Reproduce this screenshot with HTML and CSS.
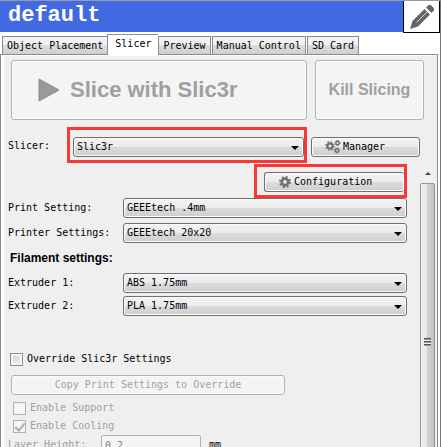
FILE: index.html
```html
<!DOCTYPE html>
<html lang="en">
<head>
    <meta charset="UTF-8">
    <meta name="viewport" content="width=device-width, initial-scale=1.0">
    <title>default</title>
    <link rel="stylesheet" href="styles.css">
</head>
<body>
    <header class="titlebar">
        <h1>default</h1>
        <button type="button" class="edit" aria-label="Edit">
            <svg width="26" height="26" viewBox="0 0 26 26" fill="#666">
                <path d="M1 25l2.500-8L15.500 5l5.500 5.500L9 22.500z"/>
                <path d="M17 3.500l2-2c1-1 2.300-.9 3.300.1l2.100 2.100c1 1 1 2.300.1 3.300l-2 2z"/>
                <path d="M7.500 18.500L18 8" stroke="#ddd" fill="none"/>
            </svg>
        </button>
    </header>

    <nav class="tabs">
        <button type="button" class="tab tab-wide">Object Placement</button>
        <button type="button" class="tab active">Slicer</button>
        <button type="button" class="tab">Preview</button>
        <button type="button" class="tab">Manual Control</button>
        <button type="button" class="tab">SD Card</button>
    </nav>

    <main class="panel">
        <div class="actions">
            <button type="button" class="big slice" disabled>
                <svg width="22" height="24" viewBox="0 0 22 24"><path d="M1 1l20 11L1 23z" fill="#999" stroke="#8c8c8c"/></svg>
                Slice with Slic3r
            </button>
            <button type="button" class="big kill" disabled>Kill Slicing</button>
        </div>

        <div class="slicer-row">
            <label for="slicer">Slicer:</label>
            <div class="highlight grow">
                <div class="combo">
                    <select id="slicer"><option>Slic3r</option></select>
                </div>
            </div>
            <button type="button" class="btn manager">
                <svg width="16" height="14" viewBox="0 0 16 14" fill="none" stroke="#707070">
                    <circle cx="5" cy="6" r="2.500" stroke-width="2"/>
                    <circle cx="5" cy="6" r="4" stroke-width="1.600" stroke-dasharray="1.600 1.540"/>
                    <circle cx="12.500" cy="3" r="1.700" stroke-width="1.400"/>
                    <circle cx="12.500" cy="3" r="2.600" stroke-dasharray="1 1.040"/>
                    <circle cx="12" cy="10.500" r="1.700" stroke-width="1.400"/>
                    <circle cx="12" cy="10.500" r="2.600" stroke-dasharray="1 1.040"/>
                </svg>
                Manager
            </button>
        </div>

        <div class="scroll-area">
            <div class="content">
                <div class="highlight config">
                    <button type="button" class="btn">
                        <svg width="12" height="12" viewBox="0 0 12 12" fill="none" stroke="#707070">
                            <circle cx="6" cy="6" r="3.200" stroke-width="2.600"/>
                            <circle cx="6" cy="6" r="5" stroke-width="2" stroke-dasharray="2 1.930"/>
                        </svg>
                        Configuration
                    </button>
                </div>

                <div class="field">
                    <label for="print">Print Setting:</label>
                    <div class="combo"><select id="print"><option>GEEEtech .4mm</option></select></div>
                </div>
                <div class="field">
                    <label for="printer">Printer Settings:</label>
                    <div class="combo"><select id="printer"><option>GEEEtech 20x20</option></select></div>
                </div>

                <h2>Filament settings:</h2>
                <div class="field tight">
                    <label for="ext1">Extruder 1:</label>
                    <div class="combo"><select id="ext1"><option>ABS 1.75mm</option></select></div>
                </div>
                <div class="field tight">
                    <label for="ext2">Extruder 2:</label>
                    <div class="combo"><select id="ext2"><option>PLA 1.75mm</option></select></div>
                </div>

                <label class="check override"><input type="checkbox"> Override Slic3r Settings</label>
                <button type="button" class="btn copy" disabled>Copy Print Settings to Override</button>
                <label class="check sub"><input type="checkbox" disabled> Enable Support</label>
                <label class="check sub"><input type="checkbox" checked disabled> Enable Cooling</label>
                <div class="layer">
                    <label for="layer">Layer Height:</label>
                    <input type="text" id="layer" value="0.2" disabled>
                    <span>mm</span>
                </div>
            </div>

            <div class="scrollbar">
                <div class="up"></div>
                <div class="thumb"><span class="grip"></span></div>
            </div>
        </div>
    </main>
</body>
</html>
```
FILE: styles.css
```css
* { box-sizing: border-box; }

body {
    display: flex;
    flex-direction: column;
    height: 100vh;
    margin: 0;
    overflow: hidden;
    background: #fff;
    border-top: 1px solid #9a9a9a;
    border-right: 1px solid #777;
    font: 10px/14px "DejaVu Sans Mono", "Liberation Mono", monospace;
    color: #000;
}
button, select, input { margin: 0; font: inherit; color: inherit; }
svg { flex: none; }

/* title bar */
.titlebar {
    display: flex;
    flex: none;
    height: 32px;
    padding-left: 8px;
    background: #4169e1;
    border-bottom: 1px solid #fff;
}
h1 {
    flex: 1;
    margin: 0;
    font: bold 22px/30px "Liberation Mono", monospace;
    color: #fff;
}
.edit {
    display: flex;
    align-items: center;
    justify-content: center;
    width: 37px;
    height: 33px;
    margin-top: -1px;
    padding: 0;
    background: #fff;
    border: 1px solid #000;
}

/* tabs */
.tabs {
    display: flex;
    flex: none;
    align-items: flex-end;
    height: 21px;
    padding-left: 2px;
}
.tab {
    height: 18px;
    margin-right: 1px;
    padding: 0 4px;
    border: 1px solid #898c95;
    border-bottom: 0;
    background: linear-gradient(#f2f2f2 50%, #dcdcdc 50%, #cfcfcf);
    white-space: nowrap;
}
.tab-wide { margin-right: 0; border-right: 0; }
.tab.active {
    position: relative;
    height: 21px;
    margin: 0 0 -1px;
    padding: 0 7px 3px;
    background: #fff;
    border-right: 0;
}

/* panel */
.panel {
    display: flex;
    flex: 1;
    flex-direction: column;
    min-height: 0;
    margin-right: 2px;
    padding: 5px 2px 0 7px;
    background: #efefef;
    border: 1px solid #898c95;
    border-bottom: 0;
    box-shadow: inset 3px 1px #fff;
}
.actions { display: flex; gap: 8px; padding: 0 11px 0 3px; }
.big {
    display: flex;
    align-items: center;
    height: 60px;
    padding: 0;
    background: #f4f4f4;
    border: 1px solid #adb2b5;
    border-radius: 3px;
    box-shadow: inset 0 0 0 1px #fcfcfc;
    color: #a0a0a0;
    font-family: "Liberation Sans", Arial, sans-serif;
    font-weight: bold;
    white-space: nowrap;
}
.slice { flex: 1; gap: 10px; padding-left: 26px; font-size: 22px; }
.kill { justify-content: center; width: 109px; font-size: 16px; }

.btn, select {
    height: 20px;
    background: linear-gradient(#f3f3f3, #ebebeb 50%, #dcdcdc 50%, #cecece);
    border: 1px solid #707070;
    border-radius: 3px;
    box-shadow: inset 0 0 0 1px #fafafa;
}
.btn {
    display: flex;
    align-items: center;
    gap: 2px;
    padding: 0;
}
.btn:disabled {
    background: #f4f4f4;
    border-color: #adb2b5;
    color: #a0a0a0;
}
.combo { position: relative; flex: 1; }
.combo::after {
    content: "";
    position: absolute;
    top: 9px;
    right: 5px;
    border: 4px solid transparent;
    border-top-color: #000;
    border-bottom: 0;
    pointer-events: none;
}
select {
    display: block;
    width: 100%;
    padding: 0 20px 0 3px;
    appearance: none;
}
.highlight { border: 3px solid #f93737; }

.slicer-row {
    display: flex;
    align-items: center;
    padding: 7px 15px 0 0;
}
.slicer-row label { width: 59px; padding-top: 2px; }
.grow { display: flex; flex: 1; padding: 7px 0 3px 3px; }
.manager { width: 109px; margin: 4px 0 0 4px; padding-left: 13px; }

/* scrolling settings */
.scroll-area { display: flex; flex: 1; min-height: 0; }
.content { flex: 1; min-width: 0; }
.config {
    width: 153px;
    margin: 1px 0 0 auto;
    padding: 5px 0 3px 7px;
}
.config .btn { width: 100%; padding-left: 14px; border-right: 0; gap: 3px; }
.field { display: flex; align-items: center; margin-bottom: 5px; }
.field label { width: 115px; }
.tight { margin-bottom: 3px; }
h2 {
    margin: 0;
    padding: 3px 0 8px 2px;
    font: bold 12px/14px "Liberation Sans", Arial, sans-serif;
}

.check { display: flex; align-items: center; gap: 4px; height: 18px; }
.check input {
    display: grid;
    place-items: center;
    width: 13px;
    height: 13px;
    appearance: none;
    background: linear-gradient(135deg, #cbcfd5, #f6f6f6);
    border: 1px solid #8e8f8f;
    box-shadow: inset 0 0 0 2px #f4f4f4;
}
.check input:disabled { background: #f6f6f6; border-color: #b1b1b1; }
.check input:checked::before {
    content: "";
    width: 4px;
    height: 8px;
    border: solid #a9adb3;
    border-width: 0 2px 2px 0;
    transform: rotate(40deg);
}
.override { margin: 34px 0 7px 2px; }
.copy { justify-content: center; width: 274px; margin: 0 0 4px 3px; }
.sub { padding-left: 5px; color: #a0a0a0; }
.sub input { flex: none; }

.layer { display: flex; align-items: center; color: #a0a0a0; }
.layer label { width: 93px; }
.layer input {
    width: 100px;
    height: 20px;
    padding: 0 3px;
    background: #f4f4f4;
    border: 1px solid #adb2b5;
    border-radius: 2px;
    color: #808080;
}
.layer span { margin-left: 8px; color: #000; }

.scrollbar {
    display: flex;
    flex-direction: column;
    align-items: center;
    width: 15px;
    margin-left: 13px;
    overflow: hidden;
    background: #f0f0f0;
}
.up {
    flex: none;
    margin: 9px 0 8px;
    border: 3px solid transparent;
    border-top: 0;
    border-bottom-color: #444;
}
.thumb {
    display: flex;
    flex: 0 0 112%;
    align-items: center;
    justify-content: center;
    width: 100%;
    background: linear-gradient(90deg, #f4f4f4, #e4e4e4 45%, #d0d0d0 50%, #c4c4c4);
    border: 1px solid #979797;
    border-radius: 2px;
}
.grip {
    width: 7px;
    height: 8px;
    background: repeating-linear-gradient(#555 0 1px, #999 1px 2px, #eee 2px 3px);
}
```
